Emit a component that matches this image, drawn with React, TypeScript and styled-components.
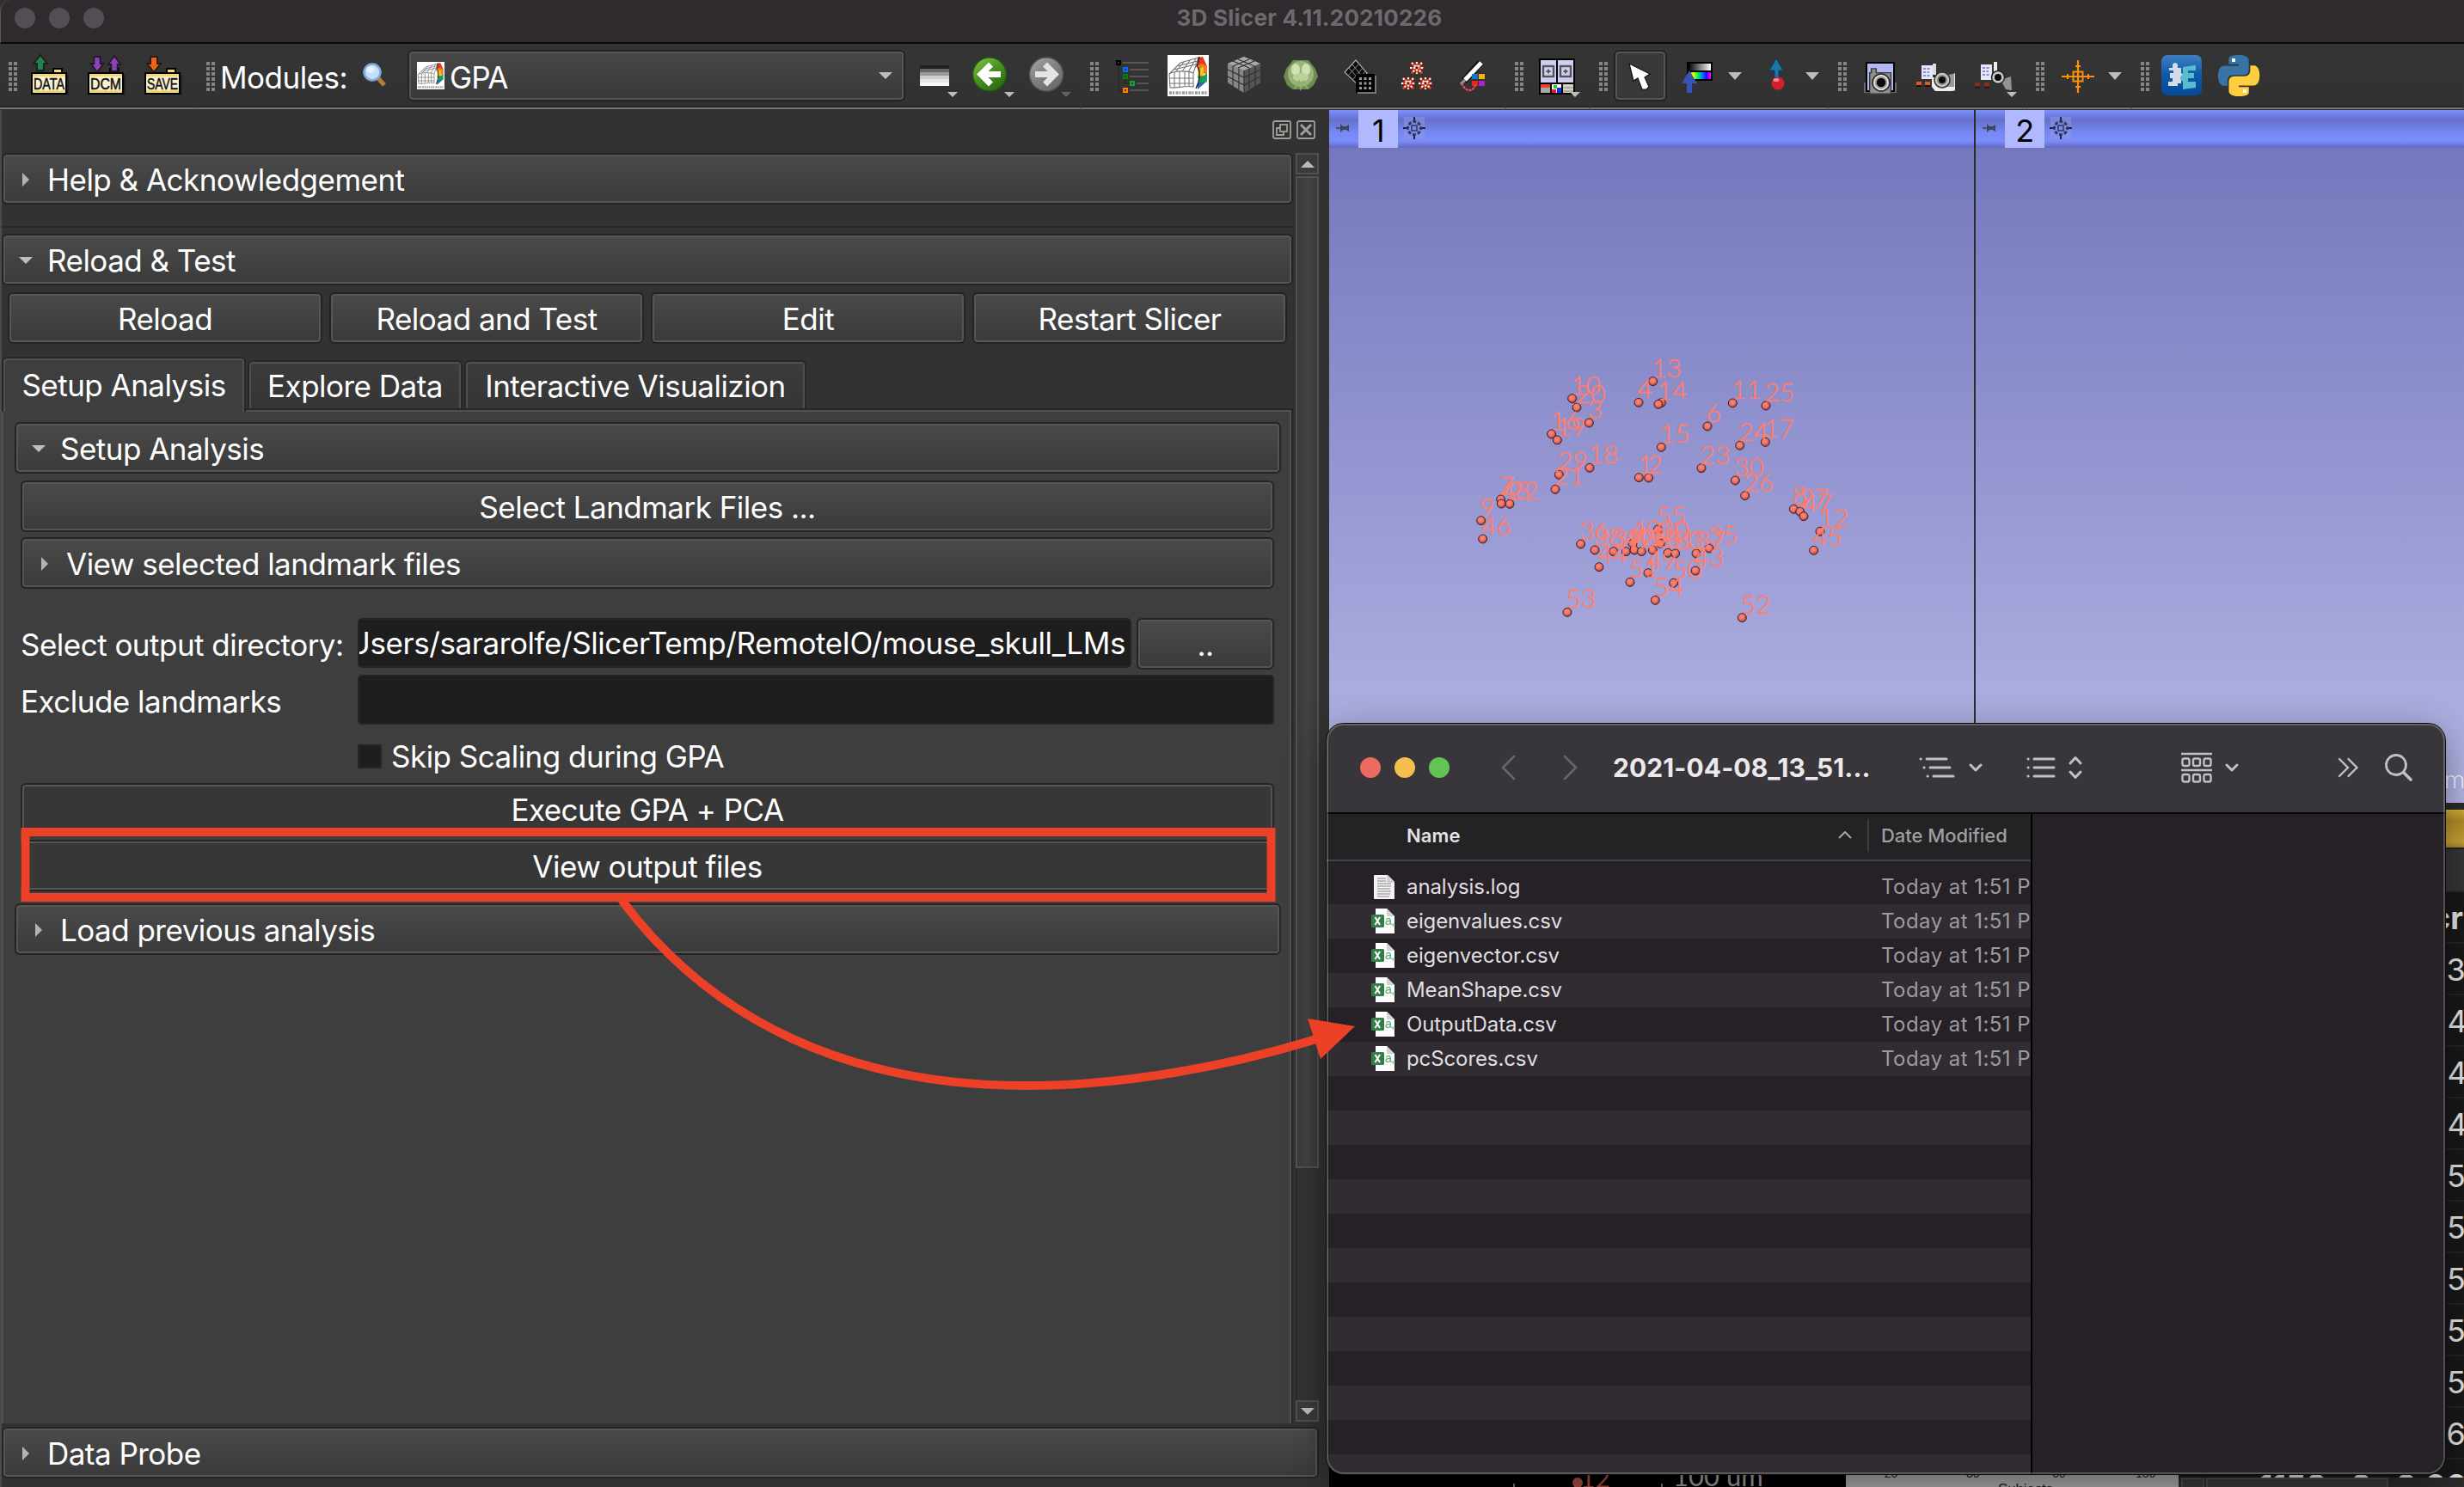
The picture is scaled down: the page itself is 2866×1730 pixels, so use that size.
import React from 'react';
import styled, { createGlobalStyle, css } from 'styled-components';

const Global = createGlobalStyle`
  html, body { margin: 0; padding: 0; background: #000; }
  * { box-sizing: border-box; }
`;

const Screen = styled.div`
  position: relative;
  width: 2866px;
  height: 1730px;
  overflow: hidden;
  display: flex;
  flex-direction: column;
  background: #323232;
  color: #fff;
  font-family: Inter, "Liberation Sans", sans-serif;
  font-size: 35px;
  letter-spacing: -0.52px;
`;

/* ---------- title bar ---------- */

const TitleBar = styled.header`
  display: flex;
  align-items: center;
  height: 51px;
  flex: none;
  padding: 0 0 7px 16px;
  background: #2f2a2e;
  border-bottom: 2px solid #0b0b0b;
  border-left: 1px solid #555;
  border-top-left-radius: 14px;
`;

const Light = styled.span<{ c: string }>`
  width: 24px;
  height: 24px;
  margin-right: 16px;
  border-radius: 50%;
  background: ${(p) => p.c};
`;

const WindowTitle = styled.div`
  margin: 0 auto;
  padding-left: 43px;
  padding-bottom: 2px;
  font-size: 26px;
  font-weight: 700;
  color: #6e696d;
  letter-spacing: 0.25px;
`;

/* ---------- toolbar ---------- */

const ToolbarRow = styled.div`
  display: flex;
  height: 77px;
  flex: none;
  background: linear-gradient(#353535, #313131);
`;

const ToolGroup = styled.div<{ w: number }>`
  width: ${(p) => p.w}px;
  height: 76px;
  flex: none;
  display: flex;
  align-items: center;
  border-bottom: 2px solid #727272;
  border-right: 1px solid #333;
  box-shadow: inset 0 -2px 0 #262626;
`;

const Slot = styled.div<{ ml: number; w: number }>`
  width: ${(p) => p.w}px;
  height: 50px;
  margin-left: ${(p) => p.ml}px;
  flex: none;
  display: flex;
  align-items: center;
  white-space: nowrap;
  svg { display: block; overflow: visible; }
`;

const ModulesLabel = styled.div`
  width: 165px;
  margin-left: 6px;
  padding-top: 3px;
  flex: none;
`;

const bevel = css`
  border: 2px solid #242424;
  border-radius: 6px;
  box-shadow: inset 0 0 0 2px #555;
`;

const Combo = styled.div`
  ${bevel}
  width: 579px;
  height: 60px;
  margin-left: 24px;
  padding: 0 13px 0 9px;
  flex: none;
  display: flex;
  align-items: center;
  background: linear-gradient(#494949, #393939);
  svg { flex: none; }
`;

const ComboText = styled.span`
  flex: 1;
  margin: 3px 0 0 6px;
  letter-spacing: -0.8px;
`;

const CursorButton = styled.div`
  ${bevel}
  width: 62px;
  height: 60px;
  margin-left: 7px;
  flex: none;
  display: flex;
  justify-content: center;
  background: #383838;
  svg { margin-top: 3px; }
`;

/* ---------- module panel ---------- */

const Body = styled.div`
  display: flex;
  flex: 1;
  min-height: 0;
`;

const Panel = styled.section`
  width: 1546px;
  flex: none;
  display: flex;
  flex-direction: column;
  border-left: 2px solid #4b4b4b;
`;

const DockTitle = styled.div`
  height: 50px;
  flex: none;
  display: flex;
  justify-content: flex-end;
  padding: 12px 16px 0 0;
  gap: 6px;
`;

const ScrollRow = styled.div`
  display: flex;
  height: 1478px;
  flex: none;
`;

const Content = styled.div`
  width: 1502px;
  display: flex;
  flex-direction: column;
`;

const Box = styled.div<{ flat?: boolean; center?: boolean; w?: number }>`
  ${bevel}
  height: 60px;
  flex: none;
  width: ${(p) => (p.w ? `${p.w}px` : 'auto')};
  display: flex;
  align-items: center;
  justify-content: ${(p) => (p.center ? 'center' : 'flex-start')};
  padding-top: 2px;
  background: ${(p) => (p.flat ? '#373737' : 'linear-gradient(#4a4a4a, #3a3a3a)')};
  white-space: nowrap;
`;

const HeaderArrow = styled.span<{ open?: boolean }>`
  width: 33px;
  margin-left: 18px;
  padding-left: ${(p) => (p.open ? 0 : 4)}px;
  flex: none;
  display: flex;
  svg { display: block; }
`;

const Rule = styled.div`
  height: 2px;
  margin: 25px 0 7px;
  background: #282828;
`;

const ButtonRow = styled.div`
  display: flex;
  gap: 8px;
  margin: 8px 0 14px 7px;
`;

const Tabs = styled.div`
  display: flex;
  align-items: flex-end;
  height: 61px;
`;

const Tab = styled.div<{ w: number; active?: boolean }>`
  width: ${(p) => p.w}px;
  height: ${(p) => (p.active ? 64 : 56)}px;
  margin-bottom: ${(p) => (p.active ? -4 : 0)}px;
  margin-right: 2px;
  z-index: ${(p) => (p.active ? 1 : 0)};
  display: flex;
  align-items: center;
  justify-content: center;
  padding-bottom: 2px;
  padding-top: ${(p) => (p.active ? 2 : 4)}px;
  border: 2px solid #272727;
  border-bottom: 0;
  border-radius: 6px 6px 0 0;
  box-shadow: inset 2px 2px 0 #505050, inset -2px 0 0 #505050;
  background: ${(p) => (p.active ? '#3e3e3e' : 'linear-gradient(#3c3c3c, #353535)')};
  white-space: nowrap;
`;

const Pane = styled.div`
  flex: 1;
  display: flex;
  flex-direction: column;
  padding: 14px 12px 0 13px;
  border: 2px solid #272727;
  border-left-color: #505050;
  border-bottom: 0;
  box-shadow: inset 0 2px 0 #505050, inset -2px 0 0 #505050;
  background: #3e3e3e;
`;

const PanelForm = styled.div`
  display: flex;
  flex-direction: column;
  margin: 8px 8px 14px 7px;
`;

const Line = styled.div`
  display: flex;
  height: 60px;
  margin-bottom: 6px;
`;

const Stack = styled.div<{ after: number }>`
  display: flex;
  flex-direction: column;
  gap: 6px;
  margin-bottom: ${(p) => p.after}px;
`;

const Label = styled.div`
  width: 392px;
  flex: none;
  margin-top: 10px;
  white-space: nowrap;
`;

const Field = styled.div`
  height: 58px;
  flex: 1;
  min-width: 0;
  display: flex;
  align-items: center;
  justify-content: flex-end;
  overflow: hidden;
  padding-right: 5px;
  border: 2px solid #252525;
  border-radius: 5px;
  background: #1e1e1e;
  white-space: nowrap;
`;

const FieldText = styled.span`
  flex: none;
  letter-spacing: -0.42px;
`;

const Browse = styled(Box)`
  width: 160px;
  margin-left: 6px;
`;

const CheckRow = styled.label`
  height: 58px;
  padding-left: 392px;
  margin-bottom: 2px;
  display: flex;
  align-items: center;
  gap: 11px;
`;

const Check = styled.span`
  width: 28px;
  height: 28px;
  background: #1e1e1e;
  border: 2px solid #262626;
`;

const ScrollBar = styled.div`
  width: 27px;
  margin-left: 3px;
  padding-bottom: 2px;
  display: flex;
  flex-direction: column;
  background: #333;
`;

const ScrollButton = styled.div`
  height: 25px;
  flex: none;
  display: flex;
  align-items: center;
  justify-content: center;
  background: #3a3a3a;
  border: 2px solid #505050;
`;

const ScrollThumb = styled.div`
  height: 1154px;
  margin-top: 2px;
  flex: none;
  border: 2px solid #525252;
  background: linear-gradient(90deg, #3a3a3a, #434343 50%, #3a3a3a);
`;

const ScrollSpace = styled.div`
  flex: 1;
  border-left: 2px solid #2a2a2a;
`;

const ProbeWrap = styled.div`
  width: 1532px;
  margin-top: 4px;
`;

/* ---------- 3D views ---------- */

const Right = styled.section`
  flex: 1;
  min-width: 0;
  display: flex;
  flex-direction: column;
`;

const Views = styled.div`
  display: flex;
  gap: 2px;
  height: 806px;
  flex: none;
  background: #2c2c2c;
`;

const View = styled.div<{ w: number }>`
  width: ${(p) => p.w}px;
  display: flex;
  flex-direction: column;
  background: linear-gradient(#7173b9, #7577bd 5%, #b5b6e6);
`;

const ViewBar = styled.div`
  height: 44px;
  flex: none;
  display: flex;
  align-items: center;
  padding-left: 8px;
  background: linear-gradient(#7e90ff 0, #7180e6 12%, #6571c9 26%, #7888f3 60%, #7b8cf9 82%, #6771cf 96%, #6069b9);
  svg { display: block; margin-bottom: 2px; }
`;

const ViewLabel = styled.span`
  width: 46px;
  height: 44px;
  margin: 0 6px 0 10px;
  display: flex;
  align-items: center;
  justify-content: center;
  background: #b0b8ff;
  color: #000;
  font-size: 36px;
  padding-top: 3px;
`;

const Scene = styled.svg`
  display: block;
  flex: 1;
  text { font-family: Lato, "Open Sans", sans-serif; font-weight: 300; letter-spacing: 0; }
`;

const Lower = styled.div`
  display: flex;
  flex: 1;
  min-height: 0;
`;

const Slice = styled.div`
  width: 601px;
  flex: none;
  display: flex;
  align-items: flex-end;
  background: #000;
  letter-spacing: 0;
  svg { display: block; }
`;

const Plot = styled.div`
  width: 387px;
  flex: none;
  display: flex;
  align-items: flex-end;
  background: #a6a6a6;
  letter-spacing: 0;
  svg { display: block; }
`;

const TableCol = styled.div`
  flex: 1;
  min-width: 0;
  display: flex;
  flex-direction: column;
  background: #181818;
  overflow: hidden;
`;

const YellowBar = styled.div`
  height: 44px;
  margin-top: 8px;
  flex: none;
  background: linear-gradient(#d9b03a, #b08c28 30%, #cba336 85%, #a88526);
  box-shadow: 0 -8px 0 #2b2b2b;
`;

const TableTools = styled.div`
  height: 52px;
  flex: none;
  border-top: 2px solid #222;
  border-bottom: 2px solid #2c2c2c;
  background: #363636;
`;

const Cell = styled.div<{ pad: number; bold?: boolean }>`
  height: 60px;
  flex: none;
  display: flex;
  align-items: center;
  padding-left: ${(p) => p.pad}px;
  padding-top: 2px;
  border-bottom: 2px solid #242424;
  font-size: 36px;
  font-weight: ${(p) => (p.bold ? 700 : 400)};
  letter-spacing: 0;
  color: #e4e4e4;
  white-space: pre;
`;

const CutRow = styled.div`
  height: 21px;
  flex: none;
  overflow: hidden;
`;

const HScroll = styled.div`
  flex: 1;
  display: flex;
  gap: 2px;
  padding-left: 3px;
  background: #2c2c2c;
`;

const HPart = styled.div<{ w: number }>`
  width: ${(p) => p.w}px;
  border: 2px solid #4a4a4a;
  border-bottom: 0;
  background: #383838;
`;

/* ---------- file browser window ---------- */

const Finder = styled.div`
  position: absolute;
  left: 1543px;
  top: 842px;
  width: 1301px;
  height: 873px;
  border-radius: 20px;
  overflow: hidden;
  display: flex;
  flex-direction: column;
  background: #262126;
  letter-spacing: -0.1px;
`;

const FinderShadow = styled.div`
  position: absolute;
  left: 1543px;
  top: 842px;
  width: 1301px;
  height: 873px;
  border-radius: 20px;
  box-shadow: 0 0 0 1px #0c0c0c, 0 12px 46px rgba(0, 0, 0, 0.42);
`;

const FinderEdge = styled.div`
  position: absolute;
  inset: 0;
  border-radius: 20px;
  box-shadow: inset 0 0 0 2px rgba(255, 255, 255, 0.22);
`;

const FinderBar = styled.div`
  height: 105px;
  flex: none;
  display: flex;
  align-items: center;
  padding: 0 0 1px 39px;
  background: #39363b;
  border-bottom: 2px solid #060606;
  svg { display: block; flex: none; }
`;

const FinderTitle = styled.div`
  width: 336px;
  margin-left: 41px;
  font-size: 30px;
  font-weight: 700;
  color: #ebe9ec;
  white-space: nowrap;
  letter-spacing: 0.1px;
`;

const FinderBody = styled.div`
  display: flex;
  flex: 1;
  min-height: 0;
`;

const FileList = styled.div`
  width: 821px;
  overflow: hidden;
  border-right: 2px solid #000;
  display: flex;
  flex-direction: column;
`;

const ListHead = styled.div`
  height: 55px;
  margin-bottom: 10px;
  flex: none;
  display: flex;
  align-items: center;
  padding: 0 0 4px 93px;
  font-size: 22px;
  background: #232224;
  border-bottom: 2px solid #444246;
`;

const HeadName = styled.span`
  width: 502px;
  font-weight: 600;
  letter-spacing: 0.1px;
  color: #e2e1e3;
`;

const HeadDate = styled.span`
  height: 38px;
  margin-left: 18px;
  padding-left: 14px;
  display: flex;
  align-items: center;
  border-left: 2px solid #3f3d41;
  color: #a09ea2;
  font-weight: 500;
  letter-spacing: -0.05px;
  white-space: nowrap;
`;

const FileRow = styled.div<{ alt: boolean }>`
  height: 40px;
  flex: none;
  display: flex;
  align-items: center;
  padding: 0 0 1px 51px;
  font-size: 24px;
  background: ${(p) => (p.alt ? '#302c32' : '#262126')};
  white-space: nowrap;
  svg { display: block; flex: none; }
`;

const FileName = styled.span`
  width: 552px;
  flex: none;
  margin-left: 12px;
  color: #e0dfe1;
`;

const FileDate = styled.span`
  flex: none;
  color: #9c9a9e;
  letter-spacing: 0.45px;
`;

const Callout = styled.svg`
  position: absolute;
  left: 0;
  top: 900px;
  pointer-events: none;
`;

/* ---------- small drawings ---------- */

const Down = ({ h = 8 }: { h?: number }) => (
  <svg width="16" height={h} viewBox="0 0 16 8" preserveAspectRatio="none"><path d="M0 0H16L8 8Z" fill="#bdbdbd" /></svg>
);

const SideArrow = () => (
  <svg width="8" height="16"><path d="M0 0L8 8L0 16Z" fill="#b4b4b4" /></svg>
);

const UpArrow = () => (
  <svg width="16" height="8"><path d="M0 8H16L8 0Z" fill="#bdbdbd" /></svg>
);

const Grip = () => (
  <svg width="10" height="50" viewBox="0 0 10 50">
    {[0, 1, 2, 3, 4, 5].map((i) => (
      <g key={i} fill="#858585">
        <rect x="0" y={9 + i * 6} width="4" height="4" />
        <rect x="6" y={9 + i * 6} width="4" height="4" />
      </g>
    ))}
  </svg>
);

const Folder = ({ label, children }: { label: string; children: React.ReactNode }) => (
  <svg width="44" height="50" viewBox="0 0 44 50">
    <path d="M26 22V17H36V22" fill="#f3d977" stroke="#000" strokeWidth="2" />
    <rect x="1" y="22" width="40" height="24" fill="#fbf0cf" stroke="#000" strokeWidth="2" />
    <rect x="2" y="23" width="38" height="3" fill="#f1d978" />
    <rect x="2" y="42" width="38" height="3" fill="#f1d978" />
    <rect x="42" y="24" width="2" height="24" fill="#222" />
    <text x="3" y="40.5" textLength="36" lengthAdjust="spacingAndGlyphs" fontFamily="Liberation Sans, sans-serif" fontSize="18" letterSpacing="0" fill="#111" stroke="#111" strokeWidth=".5">{label}</text>
    {children}
  </svg>
);

const upPath = 'M0 -10L8 0H4V8H-4V0H-8Z';

const BendGrid = ({ size }: { size: number }) => (
  <svg width={size} height={size} viewBox="0 0 48 48">
    <rect width="48" height="48" fill="#fff" />
    <g fill="none" stroke="#777" strokeWidth="1.1">
      <path d="M2 22C8 18 24 18 30 21V37C22 35 10 39 3 38Z" />
      <path d="M2 22L15 9L36 3L30 21M2 27H30M2 33H30M8 20V38M14 19V37M20 19V36M25 20V36M7 17L33 11M11 13L35 7M9 20L20 7M17 19L27 5M24 20L33 4" />
    </g>
    <path d="M35 3L41 2L46 13L40 17L34 14L36 8Z" fill="#e2391f" />
    <path d="M34 13L40 10L46 13L46 22L36 21Z" fill="#f07e1c" />
    <path d="M36 16L42 14V26L35 25Z" fill="#f4c11d" />
    <path d="M35 25L42 24L46 21V31L38 35Z" fill="#1d9c5b" />
    <path d="M35 32L44 32L35 40Z" fill="#2a66b8" />
    <path d="M34 14L37 2M33 39C38 30 38 20 36 14" stroke="#222" strokeWidth="1.4" fill="none" />
    <path d="M2 44H46" stroke="#999" strokeWidth="3.5" strokeDasharray="3 1 2 1.5" />
  </svg>
);

const RoundArrow = ({ green }: { green?: boolean }) => (
  <svg width="48" height="50" viewBox="0 0 48 50">
    <defs>
      <linearGradient id={green ? 'ga' : 'gb'} x1="0" y1="0" x2=".7" y2="1">
        <stop offset="0" stopColor={green ? '#8ac64a' : '#a9a9a9'} />
        <stop offset=".5" stopColor={green ? '#4c9324' : '#828282'} />
        <stop offset="1" stopColor={green ? '#2b690f' : '#6a6a6a'} />
      </linearGradient>
    </defs>
    <circle cx="19" cy="23.5" r="19.5" fill={`url(#${green ? 'ga' : 'gb'})`} stroke={green ? '#245a10' : '#555'} strokeWidth="1.5" />
    <path
      d="M32 23.500H10M20.500 12L9 23.500L20.500 35"
      transform={green ? undefined : 'matrix(-1 0 0 1 38 0)'}
      fill="none" stroke={green ? '#fff' : '#e4e4e4'} strokeWidth="7"
    />
    <path d="M36 44H48L42 50Z" fill={green ? '#bdbdbd' : '#636363'} />
  </svg>
);

const Star = ({ x, y }: { x: number; y: number }) => (
  <g transform={`translate(${x} ${y})`}>
    <path d="M0 -7V7M-8 0H8M-6 -6L6 6M6 -6L-6 6" stroke="#ea3315" strokeWidth="3" />
    <path d="M0 -7V7M-8 0H8M-6 -6L6 6M6 -6L-6 6" stroke="#fff" strokeWidth="2" strokeDasharray="2.2 2" />
    <rect x="-1.5" y="-1.5" width="3" height="3" fill="#322" />
  </g>
);

const Camera = ({ x, y, s = 1 }: { x: number; y: number; s?: number }) => (
  <g transform={`translate(${x} ${y}) scale(${s})`}>
    <path d="M-14 -12H-12V-17H-6V-12H12V14H-14Z" fill="#8e8e8a" stroke="#3a3a3a" strokeWidth="1.5" />
    <circle r="10.5" fill="#deded8" stroke="#222" strokeWidth="1.6" />
    <circle r="6.5" fill="#0b0b0b" stroke="#999" strokeWidth="2" />
  </g>
);

const Pin = () => (
  <svg width="16" height="10" viewBox="0 0 16 10">
    <path d="M0 5H6" stroke="#4a5068" strokeWidth="2" />
    <path d="M5 0L8 3H12L15 1V9L12 7H8L5 10Z" fill="#41455a" />
  </svg>
);

const Gear = () => (
  <svg width="26" height="26" viewBox="0 0 26 26">
    <rect x="1" width="24" height="26" fill="#8b98ea" opacity=".5" />
    <path d="M13 0V7M13 19V26M0 13H7M19 13H26" stroke="#20243a" strokeWidth="2" />
    <circle cx="13" cy="13" r="7.5" fill="none" stroke="#333a60" strokeWidth="3" strokeDasharray="3.9 2" strokeDashoffset="2" />
    <rect x="10" y="10" width="6" height="6" fill="none" stroke="#333a60" strokeWidth="1.6" />
  </svg>
);

const ExcelDoc = () => (
  <svg width="30" height="32" viewBox="0 0 30 32">
    <path d="M6 1H19L28 10V30H6Z" fill="#fdfdfd" />
    <path d="M19 1L28 10H19Z" fill="#d4d4d4" />
    <text x="17" y="20" fontFamily="Liberation Sans, sans-serif" fontSize="14" letterSpacing="-.5" fill="#4fae74">a,</text>
    <rect x="1" y="8" width="15" height="15" rx="1.5" fill="#34804a" />
    <path d="M5.5 11L11 20M11 11L5.5 20" stroke="#fff" strokeWidth="2" />
  </svg>
);

const TextDoc = () => (
  <svg width="30" height="32" viewBox="0 0 30 32">
    <path d="M5 2H20L28 10V30H5Q4 30 4 29V3Q4 2 5 2Z" fill="#f3f3f3" />
    <path d="M20 2L28 10H20Z" fill="#d8d8d8" stroke="#aaa" strokeWidth=".7" />
    <path d="M8 6H18M8 9H18M8 12H24M8 15H24M8 18H23M8 21H24M8 24H23M8 27H22" stroke="#aaa" strokeWidth="1.3" />
  </svg>
);

/* fiducial label and its position on the scene, in thirds of a pixel */
const landmarks: [string, number, number][] = [
  ['13', 728, 131], ['10', 446, 191], ['20', 462, 222], ['3', 505, 276], ['', 757, 206], ['4', 678, 205], ['14', 747, 211],
  ['11', 1006, 207], ['25', 1122, 216], ['6', 918, 288], ['24', 1031, 355], ['17', 1120, 343], ['15', 757, 361],
  ['23', 897, 434], ['18', 507, 433], ['1', 679, 467], ['2', 713, 468], ['16', 374, 315], ['19', 394, 336],
  ['29', 400, 457], ['21', 387, 508], ['30', 1015, 477], ['26', 1049, 530], ['7', 197, 543], ['48', 199, 558],
  ['22', 228, 559], ['9', 128, 617], ['46', 134, 681], ['8', 1219, 577], ['27', 1241, 586], ['47', 1254, 602],
  ['12', 1311, 655], ['45', 1289, 721], ['55', 745, 648], ['36', 476, 699], ['38', 525, 720], ['39', 590, 725],
  ['44', 540, 779], ['40', 657, 697], ['42', 634, 725], ['41', 663, 720], ['28', 688, 725], ['34', 727, 720],
  ['30', 754, 697], ['31', 780, 730], ['33', 806, 732], ['37', 879, 732], ['35', 924, 714], ['43', 876, 792],
  ['49', 711, 800], ['51', 648, 832], ['50', 800, 835], ['54', 736, 895], ['53', 429, 937], ['52', 1039, 956],
];

const files = ['analysis.log', 'eigenvalues.csv', 'eigenvector.csv', 'MeanShape.csv', 'OutputData.csv', 'pcScores.csv'];

const Header = ({ open, children }: { open?: boolean; children: React.ReactNode }) => (
  <Box>
    <HeaderArrow open={open}>{open ? <Down /> : <SideArrow />}</HeaderArrow>
    {children}
  </Box>
);

const Toolbar = () => (
  <ToolbarRow>
    <ToolGroup w={230}>
      <Slot ml={10} w={10}><Grip /></Slot>
      <Slot ml={16} w={44}>
        <Folder label="DATA"><path d={upPath} transform="translate(11 11)" fill="#258150" stroke="#17241c" strokeWidth="2" /></Folder>
      </Slot>
      <Slot ml={22} w={44}>
        <Folder label="DCM">
          <path d={upPath} transform="translate(11 11) scale(.9 -1)" fill="#8d43b8" stroke="#23182a" strokeWidth="2" />
          <path d={upPath} transform="translate(31 12) scale(.9 1)" fill="#8d43b8" stroke="#23182a" strokeWidth="2" />
        </Folder>
      </Slot>
      <Slot ml={22} w={44}>
        <Folder label="SAVE"><path d={upPath} transform="translate(11 11) scale(1 -1)" fill="#e9631a" stroke="#2c1a10" strokeWidth="2" /></Folder>
      </Slot>
    </ToolGroup>
    <ToolGroup w={1027}>
      <Slot ml={10} w={10}><Grip /></Slot>
      <ModulesLabel>Modules:</ModulesLabel>
      <Slot ml={1} w={28}>
        <svg width="28" height="50" viewBox="0 0 28 50">
          <path d="M17 27L25 36" stroke="#b97a3e" strokeWidth="5" />
          <circle cx="11" cy="21" r="9.5" fill="#c4dffa" stroke="#7fa8dd" strokeWidth="2.5" />
          <ellipse cx="9" cy="18" rx="5" ry="4" fill="#e3f0fd" />
        </svg>
      </Slot>
      <Combo>
        <BendGrid size={32} />
        <ComboText>GPA</ComboText>
        <Down />
      </Combo>
      <Slot ml={17} w={46}>
        <svg width="46" height="50" viewBox="0 0 46 50">
          {['#202020', '#666', '#999', '#ccc', '#e6e6e6', '#f6f6f6'].map((c, i) => <rect key={c} x="0" y={13 + i * 4} width="34" height="4" fill={c} />)}
          <path d="M32 44H44L38 50Z" fill="#bdbdbd" />
        </svg>
      </Slot>
      <Slot ml={16} w={48}><RoundArrow green /></Slot>
      <Slot ml={18} w={48}><RoundArrow /></Slot>
    </ToolGroup>
    <ToolGroup w={495}>
      <Slot ml={11} w={10}><Grip /></Slot>
      <Slot ml={20} w={38}>
        <svg width="38" height="50" viewBox="0 0 38 50" fill="none">
          <path d="M8 10H38M16 18H38M16 26H38M24 34H38M16 42H38" stroke="#555" strokeWidth="2" />
          <path d="M3 13V42H8M11 29V34H16" stroke="#2a2a2a" strokeWidth="1.5" />
          {([[1, 8, '#000'], [9, 16, '#0a6cf5'], [9, 24, '#087a14'], [17, 32, '#10a526'], [9, 40, '#f98500']] as [number, number, string][]).map(([x, y, c]) => (
            <rect key={y} x={x} y={y} width="4" height="4" stroke={c} strokeWidth="2" />
          ))}
        </svg>
      </Slot>
      <Slot ml={22} w={48}><BendGrid size={48} /></Slot>
      <Slot ml={20} w={42}>
        <svg width="42" height="50" viewBox="0 0 42 50">
          <path d="M21 3L40 11V33L21 45L2 33V11Z" fill="#707070" />
          <path d="M21 3L40 11L21 19L2 11Z" fill="#aaa" />
          <path d="M2 11L21 19V45L2 33Z" fill="#888" />
          <path d="M21 19L40 11V33L21 45Z" fill="#555" />
          <path d="M2 18L21 27L40 18M2 26L21 36L40 26M21 19V45M8 14V37M15 17V41M27 17V41M34 14V37M8 8L27 16M14 6L33 14M33 8L14 16M27 6L8 14" stroke="#303030" strokeWidth="1.200" fill="none" />
        </svg>
      </Slot>
      <Slot ml={24} w={42}>
        <svg width="42" height="50" viewBox="0 0 42 50">
          <path d="M12 7H30L38 17L41 26L36 36L30 41H12L5 36L1 26L4 17Z" fill="#718a52" />
          <ellipse cx="21" cy="23" rx="15" ry="15" fill="#98b478" />
          <ellipse cx="15" cy="18" rx="5" ry="7" fill="#cfe2b4" />
          <ellipse cx="27" cy="18" rx="5" ry="7" fill="#cfe2b4" />
          <ellipse cx="21" cy="27" rx="9" ry="5" fill="#b9d29a" />
          <path d="M14 40L19 32L21 40L24 32L29 40" stroke="#8fae70" strokeWidth="2" fill="none" />
        </svg>
      </Slot>
      <Slot ml={30} w={38}>
        <svg width="38" height="50" viewBox="0 0 38 50">
          <path d="M13 7L26 22L18 38L0 21Z" fill="#0a0a0a" stroke="#aaa" strokeWidth="1.2" />
          <path d="M9 12L22 28M5 16L20 33M17 11L4 25M21 16L9 30M24 20L13 34" stroke="#777" strokeWidth="1.1" />
          <rect x="14" y="24" width="20" height="20" fill="#050505" stroke="#000" strokeWidth="2" />
          <path d="M36 25V45H15" stroke="#777" strokeWidth="2" fill="none" />
          {[0, 1, 2].map((i) => [0, 1, 2].map((j) => <rect key={`${i}${j}`} x={17 + i * 5.5} y={27 + j * 5.5} width="3" height="3" fill="#999" />))}
        </svg>
      </Slot>
      <Slot ml={27} w={38}>
        <svg width="38" height="50" viewBox="0 0 38 50"><Star x={19} y={16} /><Star x={9} y={34} /><Star x={29} y={34} /></svg>
      </Slot>
      <Slot ml={30} w={32}>
        <svg width="32" height="50" viewBox="0 0 32 50">
          <path d="M25 10L6 31" stroke="#111" strokeWidth="8" />
          <path d="M26 10L7 30" stroke="#fff" strokeWidth="5" />
          <path d="M7 30L2 35" stroke="#999" strokeWidth="3" />
          <rect x="15" y="23" width="7" height="6" fill="#1477cf" /><rect x="23" y="23" width="7" height="6" fill="#f5b014" />
          <rect x="15" y="31" width="7" height="6" fill="#e3281e" /><rect x="23" y="31" width="7" height="6" fill="#a824c4" />
          <path d="M3 34C5 38 8 42 12 42C16 42 18 39 19 36" stroke="#ef4a6a" strokeWidth="2.4" fill="none" strokeDasharray="3 1" />
        </svg>
      </Slot>
    </ToolGroup>
    <ToolGroup w={97}>
      <Slot ml={10} w={10}><Grip /></Slot>
      <Slot ml={18} w={48}>
        <svg width="48" height="50" viewBox="0 0 48 50">
          <rect x="0" y="5" width="42" height="42" fill="#000" />
          <rect x="2" y="7" width="18" height="26" fill="#cdd0f2" /><rect x="22" y="7" width="18" height="26" fill="#cdd0f2" />
          <rect x="5" y="14" width="12" height="12" fill="none" stroke="#555" strokeWidth="2.4" />
          <rect x="25" y="14" width="12" height="12" fill="none" stroke="#555" strokeWidth="2.4" />
          <path d="M8.500 20H13.500M11 17.500V22.500M28.500 20H33.500M31 17.500V22.500" stroke="#555" strokeWidth="1.8" />
          <rect x="2" y="35" width="11" height="10" fill="#a8a8a8" /><rect x="2" y="35" width="11" height="4" fill="#e6422e" />
          <rect x="15" y="35" width="11" height="10" fill="#fff" /><rect x="15" y="41" width="5" height="4" fill="#f21b1b" /><rect x="21" y="39" width="5" height="6" fill="#1430f0" /><rect x="17" y="36" width="4" height="4" fill="#1ed51e" />
          <rect x="28" y="35" width="12" height="10" fill="#d4d0c4" /><path d="M28 39H40M28 43H40" stroke="#a49e90" strokeWidth="1.5" />
          <path d="M36 44H48L42 50Z" fill="#bdbdbd" />
        </svg>
      </Slot>
    </ToolGroup>
    <ToolGroup w={278}>
      <Slot ml={11} w={10}><Grip /></Slot>
      <CursorButton>
        <svg width="28" height="50" viewBox="0 0 28 50"><path d="M1 11L6 31L11 28L16 41L21 41L24 38L19 27L25 23Z" fill="#fff" stroke="#111" strokeWidth="1.2" /></svg>
      </CursorButton>
      <Slot ml={17} w={36}>
        <svg width="36" height="50" viewBox="0 0 36 50">
          <defs>
            <linearGradient id="gr"><stop offset="0" /><stop offset="1" stopColor="#fff" /></linearGradient>
            <linearGradient id="rb"><stop offset="0" stopColor="#f00" /><stop offset=".2" stopColor="#ff0" /><stop offset=".4" stopColor="#0f3" /><stop offset=".6" stopColor="#08f" /><stop offset=".8" stopColor="#30f" /><stop offset="1" stopColor="#f0f" /></linearGradient>
          </defs>
          <rect x="6" y="9" width="30" height="22" fill="#000" />
          <rect x="8" y="11" width="26" height="8" fill="url(#gr)" />
          <rect x="8" y="21" width="26" height="8" fill="url(#rb)" />
          <path d="M9 19L18 34H12V45H6V34H0Z" fill="#3455b5" />
        </svg>
      </Slot>
      <Slot ml={18} w={16}><Down h={9} /></Slot>
      <Slot ml={31} w={20}>
        <svg width="20" height="50" viewBox="0 0 20 50">
          <path d="M9 5L17 19H12V32H7V19H1Z" fill="#1878a8" stroke="#0d3f5c" strokeWidth="1" />
          <circle cx="11" cy="34" r="7.500" fill="#d3202f" /><ellipse cx="9" cy="30" rx="3.500" ry="2" fill="#f48a90" />
        </svg>
      </Slot>
      <Slot ml={23} w={16}><Down h={9} /></Slot>
    </ToolGroup>
    <ToolGroup w={231}>
      <Slot ml={11} w={10}><Grip /></Slot>
      <Slot ml={20} w={38}>
        <svg width="38" height="50" viewBox="0 0 38 50">
          <rect x="0" y="33" width="38" height="12" fill="#6a6a6a" />
          <rect x="3" y="10" width="32" height="33" fill="#b2b8f3" stroke="#000" strokeWidth="2" />
          <Camera x={20} y={33} s={0.95} />
        </svg>
      </Slot>
      <Slot ml={23} w={46}>
        <svg width="46" height="50" viewBox="0 0 46 50">
          <rect x="6" y="13" width="13" height="16" fill="#e6e6f4" /><path d="M8 17H17M8 21H15M8 25H17" stroke="#8c8ce0" strokeWidth="2" strokeDasharray="3 1.500" />
          <path d="M21 11V24" stroke="#ddd" strokeWidth="4" />
          <path d="M18 38V27H36L45 22V42Q44 43 40 43H22Z" fill="#eee" />
          <path d="M34 24L44 23V38H34Z" fill="#999" />
          <circle cx="30" cy="30" r="9" fill="#c8c8c2" stroke="#333" strokeWidth="1.500" /><circle cx="30" cy="30" r="5" fill="#0b0b0b" stroke="#888" strokeWidth="2" />
          <path d="M0 34H6M10 34H16" stroke="#e2571e" strokeWidth="4" /><path d="M0 37H6M10 37H16" stroke="#111" strokeWidth="2" />
        </svg>
      </Slot>
      <Slot ml={22} w={50}>
        <svg width="50" height="50" viewBox="0 0 50 50">
          <rect x="7" y="12" width="13" height="18" fill="#e6e6f4" /><path d="M9 16H18M9 20H16M9 24H18" stroke="#8c8ce0" strokeWidth="2" strokeDasharray="3 1.500" />
          <path d="M24 9V22" stroke="#eee" strokeWidth="4" />
          <path d="M30 30L42 26L43 42L36 41Z" fill="#9a8f8f" />
          <circle cx="27" cy="27" r="7.500" fill="#c8c8c2" stroke="#222" strokeWidth="1.500" /><circle cx="27" cy="27" r="4" fill="#0b0b0b" />
          <path d="M0 35H6M11 35H17" stroke="#8b2d1c" strokeWidth="4" /><path d="M0 39H6M11 39H17" stroke="#3a1712" strokeWidth="2" />
          <path d="M37 44H49L43 50Z" fill="#bdbdbd" />
        </svg>
      </Slot>
    </ToolGroup>
    <ToolGroup w={122}>
      <Slot ml={10} w={10}><Grip /></Slot>
      <Slot ml={20} w={38}>
        <svg width="38" height="50" viewBox="0 0 38 50" fill="none" stroke="#f98f0c">
          <path d="M19 7V45M0 26H38" strokeWidth="2.200" /><rect x="13.500" y="20.500" width="11" height="11" strokeWidth="2" />
          <path d="M16 14H22M16 38H22M7 23V29M31 23V29" strokeWidth="2" />
        </svg>
      </Slot>
      <Slot ml={16} w={16}><Down h={9} /></Slot>
    </ToolGroup>
    <ToolGroup w={386}>
      <Slot ml={10} w={10}><Grip /></Slot>
      <Slot ml={14} w={47}>
        <svg width="47" height="50" viewBox="0 0 47 50">
          <defs><linearGradient id="ex" x2="0" y2="1"><stop offset="0" stopColor="#3f7fc0" /><stop offset=".5" stopColor="#0d5aa8" /><stop offset="1" stopColor="#054a98" /></linearGradient></defs>
          <rect x="0" y="1" width="47" height="47" rx="7" fill="url(#ex)" />
          <path d="M9 16H13V12Q16 8 19 12V16H23V22Q28 24 23 28V34H19V37H8V32H13V28H10V22H14V19H9Z" fill="#d4dbe6" />
          <path d="M25 15L40 13V19H31V22H38V28H31V32H40V39L25 41V32Q20 30 23 25L25 24Z" fill="#58bccb" />
        </svg>
      </Slot>
      <Slot ml={19} w={48}>
        <svg width="48" height="48" viewBox="0 0 24 24">
          <path fill="#3673a6" d="M14.25.18l.9.2.73.26.59.3.45.32.34.34.25.34.16.33.1.3.04.26.02.2-.01.13V8.5l-.05.63-.13.55-.21.46-.26.38-.3.31-.33.25-.35.19-.35.14-.33.1-.3.07-.26.04-.21.02H8.77l-.69.05-.59.14-.5.22-.41.27-.33.32-.27.35-.2.36-.15.37-.1.35-.07.32-.04.27-.02.21v3.06H3.17l-.21-.03-.28-.07-.32-.12-.35-.18-.36-.26-.36-.36-.35-.46-.32-.59-.28-.73-.21-.88-.14-1.05-.05-1.23.06-1.22.16-1.04.24-.87.32-.71.36-.57.4-.44.42-.33.42-.24.4-.16.36-.1.32-.05.24-.01h.16l.06.01h8.16v-.83H6.18l-.01-2.75-.02-.37.05-.34.11-.31.17-.28.25-.26.31-.23.38-.2.44-.18.51-.15.58-.12.64-.1.71-.06.77-.04.84-.02 1.27.05z" />
          <path fill="#ffcf3f" d="M21.1 6.11l.28.06.32.12.35.18.36.27.36.35.35.47.32.59.28.73.21.88.14 1.04.05 1.23-.06 1.23-.16 1.04-.24.86-.32.71-.36.57-.4.45-.42.33-.42.24-.4.16-.36.09-.32.05-.24.02-.16-.01h-8.22v.82h5.84l.01 2.76.02.36-.05.34-.11.31-.17.29-.25.25-.31.24-.38.2-.44.17-.51.15-.58.13-.64.09-.71.07-.77.04-.84.01-1.27-.04-1.07-.14-.9-.2-.73-.25-.59-.3-.45-.33-.34-.34-.25-.34-.16-.33-.1-.3-.04-.25-.02-.2.01-.13v-5.34l.05-.64.13-.54.21-.46.26-.38.3-.32.33-.24.35-.2.35-.14.33-.1.3-.06.26-.04.21-.02.13-.01h5.84l.69-.05.59-.14.5-.21.41-.28.33-.32.27-.35.2-.36.15-.36.1-.35.07-.32.04-.28.02-.21V6.07h2.09l.14.01z" />
          <rect x="8" y="2" width="2" height="2" fill="#fff" /><rect x="14.500" y="20" width="2" height="2" fill="#fff" />
        </svg>
      </Slot>
    </ToolGroup>
  </ToolbarRow>
);

const ModulePanel = () => (
  <Panel>
    <DockTitle>
      <svg width="22" height="22" viewBox="0 0 22 22" fill="none" stroke="#a0a09a" strokeWidth="1.800">
        <rect x="1" y="1" width="20" height="20" rx="2" /><rect x="9" y="5" width="8" height="8" /><path d="M9 9H5V17H13V13" />
      </svg>
      <svg width="22" height="22" viewBox="0 0 22 22" fill="none" stroke="#a0a09a" strokeWidth="1.800">
        <rect x="1" y="1" width="20" height="20" rx="2" /><path d="M5 5L17 17M17 5L5 17" strokeWidth="3" />
      </svg>
    </DockTitle>
    <ScrollRow>
      <Content>
        <Header>Help &amp; Acknowledgement</Header>
        <Rule />
        <Header open>Reload &amp; Test</Header>
        <ButtonRow>
          {['Reload', 'Reload and Test', 'Edit', 'Restart Slicer'].map((t) => <Box key={t} center w={366}>{t}</Box>)}
        </ButtonRow>
        <Tabs>
          <Tab w={284} active>Setup Analysis</Tab>
          <Tab w={250}>Explore Data</Tab>
          <Tab w={398}>Interactive Visualizion</Tab>
        </Tabs>
        <Pane>
          <Header open>Setup Analysis</Header>
          <PanelForm>
            <Stack after={34}>
              <Box center>Select Landmark Files ...</Box>
              <Header>View selected landmark files</Header>
            </Stack>
            <Line>
              <Label>Select output directory:</Label>
              <Field><FieldText>/Users/sararolfe/SlicerTemp/RemoteIO/mouse_skull_LMs</FieldText></Field>
              <Browse center>..</Browse>
            </Line>
            <Line><Label>Exclude landmarks</Label><Field /></Line>
            <CheckRow><Check />Skip Scaling during GPA</CheckRow>
            <Stack after={0}>
              <Box flat center>Execute GPA + PCA</Box>
              <Box flat center>View output files</Box>
            </Stack>
          </PanelForm>
          <Header>Load previous analysis</Header>
        </Pane>
      </Content>
      <ScrollBar>
        <ScrollButton><UpArrow /></ScrollButton>
        <ScrollThumb />
        <ScrollSpace />
        <ScrollButton><Down /></ScrollButton>
      </ScrollBar>
    </ScrollRow>
    <ProbeWrap><Header>Data Probe</Header></ProbeWrap>
  </Panel>
);

const ThreeDViews = () => (
  <Views>
    <View w={750}>
      <ViewBar><Pin /><ViewLabel>1</ViewLabel><Gear /></ViewBar>
      <Scene width="750" height="762" viewBox="1546 172 750 762">
        <defs><radialGradient id="dot" cx=".45" cy=".4"><stop offset="0" stopColor="#ff8a7a" /><stop offset=".7" stopColor="#ea7060" /><stop offset="1" stopColor="#a84c40" /></radialGradient></defs>
        {landmarks.map(([, x, y], i) => <circle key={i} cx={1680 + x / 3} cy={400 + y / 3} r="5" fill="url(#dot)" stroke="#3e2230" strokeWidth="1" />)}
        {landmarks.map(([t, x, y], i) => <text key={i} x={1680 + x / 3 - 1.5} y={400 + y / 3 - 5} fontSize="30" fill="#ff7d6c" stroke="#ff7d6c" strokeWidth=".5">{t}</text>)}
      </Scene>
    </View>
    <View w={568}>
      <ViewBar><Pin /><ViewLabel>2</ViewLabel><Gear /></ViewBar>
      <Scene width="568" height="762" viewBox="2298 172 568 762">
        <text x="2843" y="917" fontSize="30" fill="#fff">m</text>
      </Scene>
    </View>
  </Views>
);

const LowerViews = () => (
  <Lower>
    <Slice>
      <svg width="601" height="20" viewBox="1546 1710 601 20">
        <circle cx="1835" cy="1725" r="6" fill="#a84c40" />
        <text x="1838" y="1731" fontFamily="Lato, sans-serif" fontSize="30" fill="#a84c40">12</text>
        <text x="1946" y="1729" fontFamily="Lato, sans-serif" fontSize="31" fill="#999">100 um</text>
        <path d="M1761 1726V1730M1933 1726V1730" stroke="#999" strokeWidth="1.500" />
      </svg>
    </Slice>
    <Plot>
      <svg width="387" height="20" viewBox="2147 1710 387 20" fontFamily="Liberation Sans, sans-serif" fontSize="14" fill="#222">
        <text x="2187" y="1719">-20</text><text x="2287" y="1719">30</text><text x="2387" y="1719">60</text><text x="2484" y="1719">130</text>
        <text x="2324" y="1738" fontSize="17" textLength="64">Subjects</text>
      </svg>
    </Plot>
    <TableCol>
      <YellowBar />
      <TableTools />
      <Cell bold pad={295}>cr</Cell>
      {['3', '4', '4', '4', '5', '5', '5', '5', '5', '6'].map((d, i) => <Cell key={i} pad={302}>.{d}</Cell>)}
      <CutRow><Cell bold pad={94}>1150 . 0 . 0.000</Cell></CutRow>
      <HScroll><HPart w={27} /><HPart w={212} /></HScroll>
    </TableCol>
  </Lower>
);

const Chevron = ({ ml }: { ml: number }) => (
  <Slot ml={ml} w={16}><svg width="16" height="10" viewBox="0 0 16 10" fill="none" stroke="#c2c0c4" strokeWidth="3" strokeLinecap="round" strokeLinejoin="round"><path d="M2 2L8 8L14 2" /></svg></Slot>
);

const FileBrowser = () => (
  <Finder>
    <FinderBar>
      <Light c="#ed6a5e" /><Light c="#f5bf4f" /><Light c="#61c454" />
      <Slot ml={44} w={16}><svg width="16" height="28" viewBox="0 0 16 28" fill="none" stroke="#68656a" strokeWidth="2.600" strokeLinecap="round"><path d="M15 1L2 14L15 27" /></svg></Slot>
      <Slot ml={57} w={16}><svg width="16" height="28" viewBox="0 0 16 28" fill="none" stroke="#68656a" strokeWidth="2.600" strokeLinecap="round"><path d="M1 1L14 14L1 27" /></svg></Slot>
      <FinderTitle>2021-04-08_13_51...</FinderTitle>
      <Slot ml={20} w={41}>
        <svg width="41" height="26" viewBox="0 0 41 26" stroke="#c2c0c4" strokeWidth="3" strokeLinecap="round"><path d="M2 3H2.200M9 3H32M6 13H6.200M13 13H36M10 23H10.200M17 23H40" /></svg>
      </Slot>
      <Chevron ml={17} />
      <Slot ml={51} w={34}>
        <svg width="34" height="26" viewBox="0 0 34 26" stroke="#c2c0c4" strokeWidth="3" strokeLinecap="round"><path d="M2 3H2.200M9 3H32M2 13H2.200M9 13H32M2 23H2.200M9 23H32" /></svg>
      </Slot>
      <Slot ml={15} w={16}>
        <svg width="16" height="28" viewBox="0 0 16 28" fill="none" stroke="#c2c0c4" strokeWidth="3" strokeLinecap="round" strokeLinejoin="round"><path d="M2 9L8 2.500L14 9M2 19L8 25.500L14 19" /></svg>
      </Slot>
      <Slot ml={115} w={36}>
        <svg width="36" height="36" viewBox="0 0 36 36" fill="none" stroke="#c2c0c4" strokeWidth="2.400">
          <path d="M0 2H36M0 21H36" />
          {[1.5, 14, 26.5].map((x) => <g key={x}><rect x={x} y="7.500" width="8" height="8.500" rx="2" /><rect x={x} y="26" width="8" height="8.500" rx="2" /></g>)}
        </svg>
      </Slot>
      <Chevron ml={15} />
      <Slot ml={115} w={24}>
        <svg width="24" height="22" viewBox="0 0 24 22" fill="none" stroke="#c2c0c4" strokeWidth="2.400" strokeLinecap="round"><path d="M2 1L12 11L2 21M12.500 1L22.500 11L12.500 21" /></svg>
      </Slot>
      <Slot ml={31} w={32}>
        <svg width="32" height="32" viewBox="0 0 32 32" fill="none" stroke="#c2c0c4" strokeWidth="2.800" strokeLinecap="round"><circle cx="13" cy="13" r="11.500" /><path d="M21.500 21.500L30 30" strokeWidth="3.600" /></svg>
      </Slot>
    </FinderBar>
    <FinderBody>
      <FileList>
        <ListHead>
          <HeadName>Name</HeadName>
          <svg width="16" height="9" viewBox="0 0 16 9" fill="none" stroke="#a9a7ab" strokeWidth="2"><path d="M1 8L8 1L15 8" /></svg>
          <HeadDate>Date Modified</HeadDate>
        </ListHead>
        {Array.from({ length: 18 }, (_, i) => (
          <FileRow key={i} alt={i % 2 === 1}>
            {files[i] && (
              <>
                {i === 0 ? <TextDoc /> : <ExcelDoc />}
                <FileName>{files[i]}</FileName>
                <FileDate>Today at 1:51 PM</FileDate>
              </>
            )}
          </FileRow>
        ))}
      </FileList>
    </FinderBody>
    <FinderEdge />
  </Finder>
);

export default function App() {
  return (
    <Screen>
      <Global />
      <TitleBar>
        <Light c="#534e53" /><Light c="#534e53" /><Light c="#534e53" />
        <WindowTitle>3D Slicer 4.11.20210226</WindowTitle>
      </TitleBar>
      <Toolbar />
      <Body>
        <ModulePanel />
        <Right>
          <ThreeDViews />
          <LowerViews />
        </Right>
      </Body>
      <FinderShadow />
      <FileBrowser />
      <Callout width="1600" height="400" viewBox="0 900 1600 400">
        <rect x="29.500" y="968" width="1449" height="76" fill="none" stroke="#ec4126" strokeWidth="10" />
        <path d="M723 1047C830 1190 990 1263 1192 1263C1310 1263 1430 1240 1534 1208" fill="none" stroke="#ec4126" strokeWidth="10" />
        <path d="M1576 1194L1521 1185L1536 1232Z" fill="#ec4126" />
      </Callout>
    </Screen>
  );
}
